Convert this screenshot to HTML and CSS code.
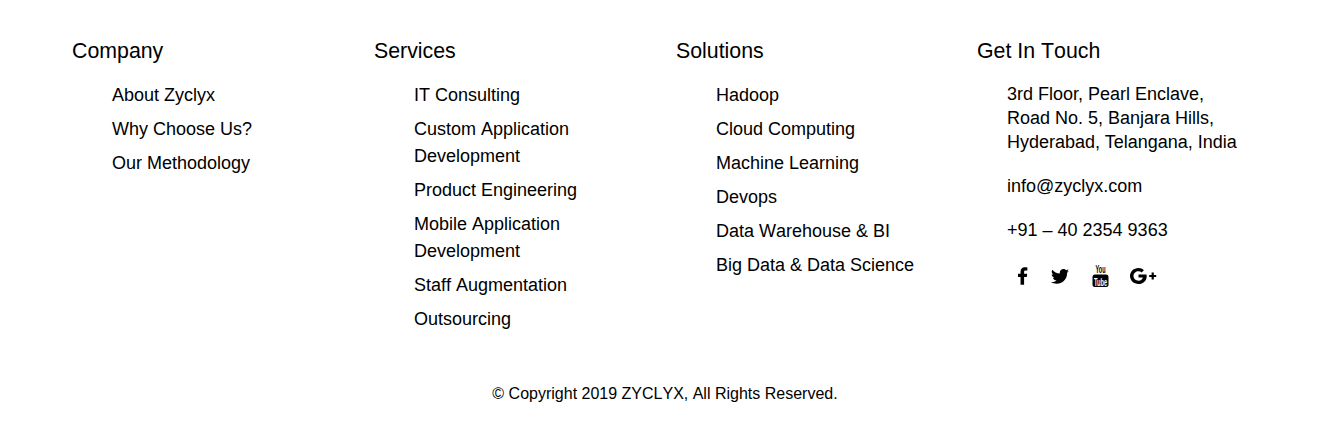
FILE: index.html
```html
<!DOCTYPE html>
<html lang="en">
<head>
    <meta charset="UTF-8">
    <title>Zyclyx Footer</title>
    <link rel="stylesheet" href="styles.css">
</head>
<body>
    <footer class="footer">
        <div class="columns">
            <div class="col">
                <h4>Company</h4>
                <ul>
                    <li>About Zyclyx</li>
                    <li>Why Choose Us?</li>
                    <li>Our Methodology</li>
                </ul>
            </div>
            <div class="col">
                <h4>Services</h4>
                <ul>
                    <li>IT Consulting</li>
                    <li>Custom Application Development</li>
                    <li>Product Engineering</li>
                    <li>Mobile Application Development</li>
                    <li>Staff Augmentation</li>
                    <li>Outsourcing</li>
                </ul>
            </div>
            <div class="col">
                <h4>Solutions</h4>
                <ul>
                    <li>Hadoop</li>
                    <li>Cloud Computing</li>
                    <li>Machine Learning</li>
                    <li>Devops</li>
                    <li>Data Warehouse &amp; BI</li>
                    <li>Big Data &amp; Data Science</li>
                </ul>
            </div>
            <div class="col">
                <h4>Get In Touch</h4>
                <div class="contact">
                    <p>3rd Floor, Pearl Enclave,<br>Road No. 5, Banjara Hills,<br>Hyderabad, Telangana, India</p>
                    <p>info@zyclyx.com</p>
                    <p>+91 – 40 2354 9363</p>
                    <div class="social">
                        <svg class="icon-f" width="10" height="18" viewBox="0 0 11 19"><path d="M2.800 19V10.600H0V7.100H2.800V4.700C2.800 1.800 4.600 0 7.400 0C8.700 0 9.800 0.100 10.300 0.200V3.500H8.400C7 3.500 6.700 4.200 6.700 5.100V7.100H10.100L9.700 10.600H6.700V19Z"/></svg>
                        <svg class="icon-tw" width="18" height="15" viewBox="0 0 24 20"><path d="M24 2.400C23.100 2.800 22.200 3.100 21.200 3.200C22.200 2.600 23 1.600 23.400 0.400C22.400 1 21.400 1.400 20.200 1.600C19.300 0.600 18 0 16.600 0C13.900 0 11.700 2.200 11.700 4.900C11.700 5.300 11.700 5.700 11.800 6C7.700 5.800 4.100 3.900 1.700 0.900C1.300 1.600 1 2.500 1 3.400C1 5.100 1.900 6.600 3.200 7.500C2.400 7.500 1.600 7.200 1 6.900V7C1 9.400 2.700 11.400 4.900 11.800C4.500 11.900 4.100 12 3.600 12C3.300 12 3 12 2.700 11.900C3.300 13.900 5.100 15.300 7.300 15.300C5.600 16.600 3.500 17.400 1.200 17.400C0.800 17.400 0.400 17.400 0 17.300C2.200 18.700 4.800 19.500 7.500 19.500C16.600 19.500 21.500 12 21.500 5.500V4.900C22.500 4.200 23.300 3.300 24 2.400Z"/></svg>
                        <svg class="icon-yt" width="17" height="24" viewBox="0 -1 17 24">
                            <text class="yt-you" transform="translate(8.500 8) scale(0.55 1)" text-anchor="middle">You</text>
                            <rect x="0.500" y="9.500" width="16" height="12.500" rx="2.500"/>
                            <text class="yt-tube" transform="translate(8.500 20.500) scale(0.52 1)" text-anchor="middle">Tube</text>
                        </svg>
                        <svg class="icon-g" width="27" height="16" viewBox="0 0 27 16">
                            <path d="M8.500 6.500V9.400H12.800C12.500 11.300 10.900 12.700 8.500 12.700C5.800 12.700 3.500 10.600 3.500 8C3.500 5.400 5.800 3.300 8.500 3.300C9.800 3.300 10.800 3.700 11.600 4.500L13.900 2.200C12.500 0.900 10.700 0 8.500 0C3.800 0 0 3.600 0 8C0 12.400 3.800 16 8.500 16C13.200 16 16.700 12.800 16.700 8.200C16.700 7.600 16.600 7 16.500 6.500Z"/>
                            <path d="M21.600 4.500H23.800V6.900H26.200V9.100H23.800V11.500H21.600V9.100H19.200V6.900H21.600Z"/>
                        </svg>
                    </div>
                </div>
            </div>
        </div>
        <p class="copyright">© Copyright 2019 ZYCLYX, All Rights Reserved.</p>
    </footer>
</body>
</html>
```
FILE: styles.css
```css
body {
    margin: 0;
    background-color: #fff;
    color: #000;
    font-family: "Liberation Sans", Arial, sans-serif;
    font-kerning: none;
}

.footer {
    padding: 39px 42px 0 72px;
    height: 388px;
}

.columns {
    display: grid;
    grid-template-columns: 302px 302px 301px 302px;
}

h4 {
    font-size: 21.33px;
    font-weight: 400;
    line-height: 24px;
    margin: 0 0 19px;
}

ul {
    list-style: none;
    margin: 0;
    padding: 0 60px 0 40px;
}

li {
    font-size: 18px;
    line-height: 27px;
    margin-bottom: 7px;
}

.contact {
    padding-left: 30px;
    font-kerning: normal;
}

.contact p {
    font-size: 18px;
    line-height: 24px;
    margin: 0 0 20px;
}

.social {
    display: flex;
    align-items: center;
    gap: 23px;
    padding-left: 11px;
    margin-top: 22px;
}

.icon-g {
    margin-left: -2px;
}

.yt-you {
    font-size: 10px;
    font-weight: 700;
}

.yt-tube {
    font-size: 11px;
    font-weight: 700;
    fill: #fff;
}

.copyright {
    font-size: 16px;
    line-height: 20px;
    text-align: center;
    margin: 44px 0 0;
    padding-right: 21px;
}
```
